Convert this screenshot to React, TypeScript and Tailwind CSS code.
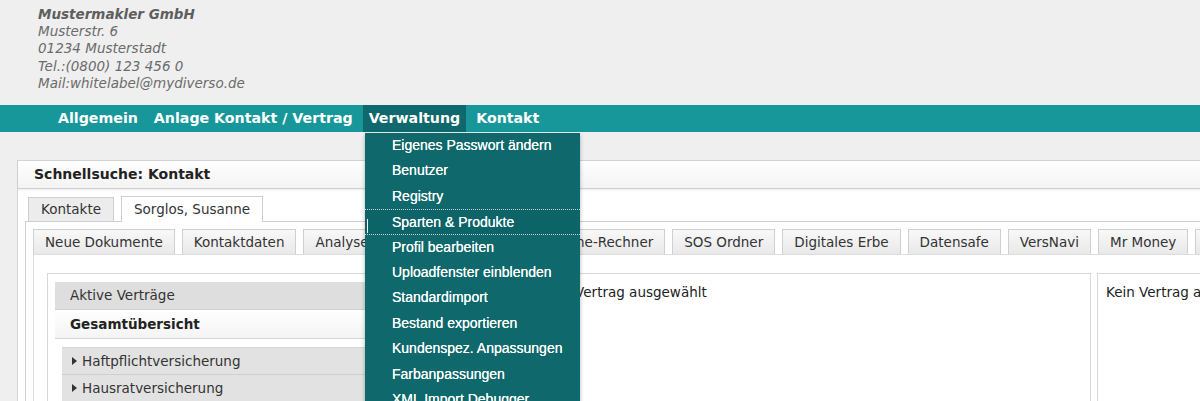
const verdana = { fontFamily: '"DejaVu Sans", Verdana, sans-serif' };

const mainNav = ["Allgemein", "Anlage Kontakt / Vertrag", "Verwaltung", "Kontakt"];

const menuItems = [
  "Eigenes Passwort ändern",
  "Benutzer",
  "Registry",
  "Sparten & Produkte",
  "Profil bearbeiten",
  "Uploadfenster einblenden",
  "Standardimport",
  "Bestand exportieren",
  "Kundenspez. Anpassungen",
  "Farbanpassungen",
  "XML Import Debugger",
];

const subTabs = [
  "Neue Dokumente",
  "Kontaktdaten",
  "Analyse",
  "Vertragsvergleich",
  "Online-Rechner",
  "SOS Ordner",
  "Digitales Erbe",
  "Datensafe",
  "VersNavi",
  "Mr Money",
  "Notizen",
];

function Dropdown() {
  return (
    <div className="absolute left-[365px] top-[133px] w-[215px] bg-[#0f686c] pb-2 shadow-[0_2px_4px_rgba(0,0,0,0.3)] font-['Liberation_Sans',Arial,sans-serif] text-[14px] text-white [text-shadow:0_0_0.4px_#fff]">
      {menuItems.map((item) => {
        const active = item === "Sparten & Produkte";
        return (
          <div
            key={item}
            className={`relative h-[25.4px] leading-[25px] pl-[27px] whitespace-nowrap ${
              active ? "border-y border-dotted border-[#c9d6d6] bg-[#0d6468]" : ""
            }`}
          >
            {active && <span className="absolute left-[2px] top-[9px] h-[14px] w-px bg-white" />}
            {item}
          </div>
        );
      })}
    </div>
  );
}

function AccordionRow({ label }: { label: string }) {
  return (
    <div className="flex h-[27px] items-center gap-[5px] border-b border-[#cfcfcf] bg-[#e2e2e2] pl-[10px] text-[#333]">
      <svg width="5" height="8" viewBox="0 0 5 8">
        <path d="M0 0 L5 4 L0 8 Z" fill="#333" />
      </svg>
      {label}
    </div>
  );
}

export default function App() {
  return (
    <div className="relative h-[401px] w-[1200px] overflow-hidden bg-[#efefef]" style={verdana}>
      {/* Anschrift */}
      <div className="pl-[38px] pt-[6px] text-[13.5px] italic leading-[17.2px] text-[#6b6b6b]">
        <div className="font-bold text-[#5e5e5e]">Mustermakler GmbH</div>
        <div>Musterstr. 6</div>
        <div>01234 Musterstadt</div>
        <div>Tel.:(0800) 123 456 0</div>
        <div>Mail:whitelabel@mydiverso.de</div>
      </div>

      {/* Hauptnavigation */}
      <div className="mt-[12px] flex h-[28px] items-stretch gap-[4px] border-t border-[#e8f2f2] bg-[#18979b] pl-[52px] text-[14.2px] font-bold text-white">
        {mainNav.map((n) => (
          <div
            key={n}
            className={`flex items-center px-[6px] ${n === "Verwaltung" ? "bg-[#0f686c]" : ""}`}
          >
            {n}
          </div>
        ))}
      </div>

      {/* Karte Schnellsuche */}
      <div className="ml-[17px] mt-[28px] w-[1200px] border border-[#d4d4d4] bg-white text-[13.5px]">
        <div className="flex h-[28px] items-center border-b border-[#d0d0d0] bg-gradient-to-b from-white to-[#f3f3f3] pl-[16px] text-[14px] font-bold text-[#222] shadow-[0_1px_2px_rgba(0,0,0,0.08)]">
          Schnellsuche: Kontakt
        </div>

        <div className="flex items-end gap-[7px] pl-[10px] pt-[7px] text-[#333]">
          <div className="flex h-[24px] items-center border border-b-0 border-[#cfcfcf] bg-[#ececec] px-[12px]">
            Kontakte
          </div>
          <div className="-mb-px flex h-[26px] items-center border border-b-0 border-[#cfcfcf] bg-white px-[12px]">
            Sorglos, Susanne
          </div>
        </div>

        <div className="ml-[7px] border-l border-t border-[#cfcfcf] bg-white pl-[7px] pt-[7px]">
          <div className="flex gap-[7px] text-[#333]">
            {subTabs.map((t) => (
              <div
                key={t}
                className="flex h-[25px] shrink-0 items-center whitespace-nowrap border border-b-0 border-[#cfcfcf] bg-gradient-to-b from-[#f8f8f8] to-[#e9e9e9] px-[11px]"
              >
                {t}
              </div>
            ))}
          </div>

          <div className="border-l border-t border-[#dcdcdc] bg-white pl-[13px] pt-[18px]">
            <div className="flex gap-[6px] text-[#222]">
              {/* Vertragsliste */}
              <div className="h-[140px] w-[480px] shrink-0 border border-[#d8d8d8] px-[7px] pt-[8px]">
                <div className="flex h-[28px] items-center border-b border-[#cfcfcf] bg-[#dedede] pl-[15px] text-[#333]">
                  Aktive Verträge
                </div>
                <div className="flex h-[29px] items-center border-b border-[#d4d4d4] bg-gradient-to-b from-white to-[#f4f4f4] pl-[15px] font-bold">
                  Gesamtübersicht
                </div>
                <div className="ml-[7px] mt-[8px] border-t border-[#d6d6d6]">
                  <AccordionRow label="Haftpflichtversicherung" />
                  <AccordionRow label="Hausratversicherung" />
                </div>
              </div>

              {/* Details */}
              <div className="h-[140px] w-[558px] shrink-0 border border-[#d8d8d8] px-[8px] pt-[8px]">
                Kein Vertrag ausgewählt
              </div>

              <div className="h-[140px] w-[300px] shrink-0 border border-[#d8d8d8] px-[8px] pt-[8px]">
                Kein Vertrag ausgewählt
              </div>
            </div>
          </div>
        </div>
      </div>

      <Dropdown />
    </div>
  );
}
